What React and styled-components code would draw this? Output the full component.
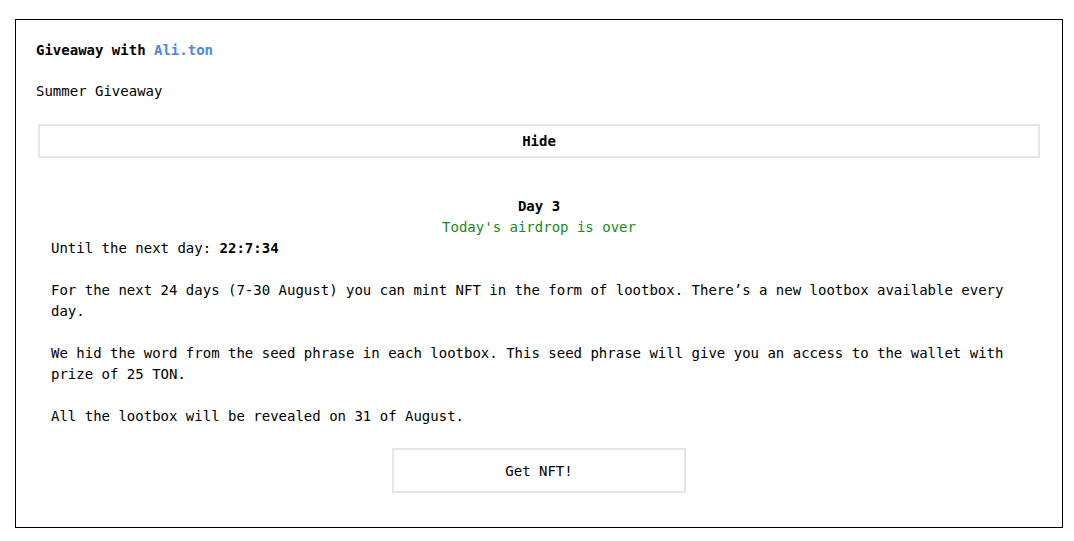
import React from "react";
import styled, { createGlobalStyle } from "styled-components";

const Global = createGlobalStyle`
  html, body { margin: 0; padding: 0; background: #fff; }
  body {
    font-family: "DejaVu Sans Mono", "Liberation Mono", monospace;
    font-size: 14px;
    line-height: 21px;
    color: #000;
  }
  * { box-sizing: border-box; }
`;

const Page = styled.div`
  padding: 19px 11px 14px 15px;
`;

const Card = styled.section`
  border: 1px solid #000;
  padding: 20px 20px 34px;
  display: flex;
  flex-direction: column;
`;

const Title = styled.h1`
  margin: 0;
  font-size: 14px;
  line-height: 21px;
  font-weight: bold;
`;

const Accent = styled.span`
  color: #4a88e0;
`;

const Subtitle = styled.p`
  margin: 20px 0 0;
`;

const Button = styled.button`
  font-family: inherit;
  font-size: 14px;
  color: #000;
  background: #fff;
  border: 2px solid #e6e6e6;
  cursor: pointer;
  font-weight: ${(p) => (p.$bold ? "bold" : "normal")};
  height: ${(p) => p.$height}px;
  padding: 0;
`;

const HideButton = styled(Button)`
  margin: 22px 2px 0;
`;

const Day = styled.div`
  margin-top: 38px;
  display: flex;
  flex-direction: column;
`;

const DayTitle = styled.div`
  text-align: center;
  font-weight: bold;
`;

const Status = styled.div`
  text-align: center;
  color: #168c16;
`;

const Details = styled.div`
  padding: 0 15px;
  display: flex;
  flex-direction: column;
`;

const Para = styled.p`
  margin: ${(p) => (p.$first ? 0 : "21px")} 0 0;
`;

const Actions = styled.div`
  display: flex;
  justify-content: center;
  margin-top: 21px;
`;

const NftButton = styled(Button)`
  width: 294px;
`;

export default function App() {
  return (
    <>
      <Global />
      <Page>
        <Card>
          <Title>
            Giveaway with <Accent>Ali.ton</Accent>
          </Title>
          <Subtitle>Summer Giveaway</Subtitle>
          <HideButton $bold $height={34}>Hide</HideButton>
          <Day>
            <DayTitle>Day 3</DayTitle>
            <Status>Today's airdrop is over</Status>
            <Details>
              <Para $first>
                Until the next day: <b>22:7:34</b>
              </Para>
              <Para>
                For the next 24 days (7-30 August) you can mint NFT in the form of lootbox. There’s a new lootbox available every day.
              </Para>
              <Para>
                We hid the word from the seed phrase in each lootbox. This seed phrase will give you an access to the wallet with prize of 25 TON.
              </Para>
              <Para>All the lootbox will be revealed on 31 of August.</Para>
            </Details>
            <Actions>
              <NftButton $height={45}>Get NFT!</NftButton>
            </Actions>
          </Day>
        </Card>
      </Page>
    </>
  );
}
